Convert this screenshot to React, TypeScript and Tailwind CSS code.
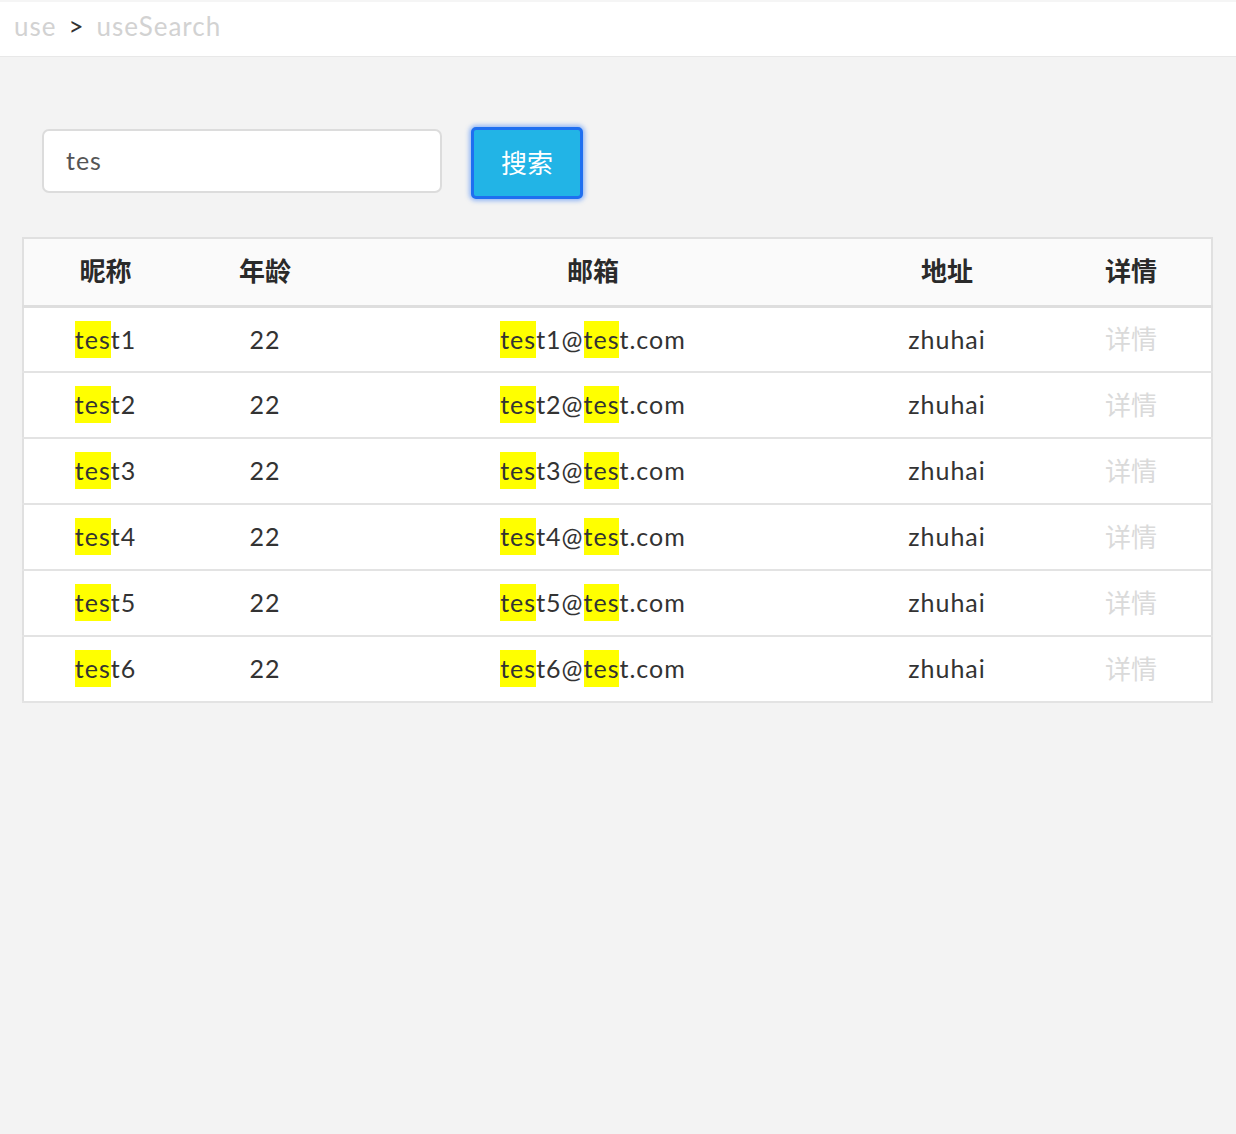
import React from 'react';

const rows = [1, 2, 3, 4, 5, 6].map((i) => ({
  name: `test${i}`,
  age: 22,
  email: `test${i}@test.com`,
  address: 'zhuhai',
}));

const keyword = 'tes';

const Highlight: React.FC<{ text: string }> = ({ text }) => {
  const parts = text.split(keyword);
  return (
    <>
      {parts.map((part, i) => (
        <React.Fragment key={i}>
          {i > 0 && <span className="bg-[#ffff00] inline-block leading-[37px]">{keyword}</span>}
          {part}
        </React.Fragment>
      ))}
    </>
  );
};

const App: React.FC = () => {
  return (
    <div
      className="min-h-[1134px] bg-[#f3f3f3] text-[#333] tracking-[1px]"
      style={{ fontFamily: 'Lato, "Noto Sans CJK SC", sans-serif' }}
    >
      {/* Breadcrumb */}
      <div className="h-[57px] bg-white border-t-2 border-[#f5f5f5] border-b border-b-[#e8e8e8] flex items-center pb-[6px] px-[14px] text-[26px] text-[#d2d2d2]">
        <span>use</span>
        <span className="mx-[12px] text-[#333]">&gt;</span>
        <span>useSearch</span>
      </div>

      <div className="pl-[22px] pt-[70px]">
        {/* Search bar */}
        <div className="flex items-center gap-[29px] pl-[20px]">
          <div className="w-[400px] h-[64px] -mt-[5px] bg-white border-2 border-[#dcdcdc] rounded-[7px] flex items-center px-[22px] text-[25px] text-[#555]">
            tes
          </div>
          <button className="w-[112px] h-[72px] bg-[#22b4e6] border-[3px] border-[#1f6ff0] rounded-[5px] text-white text-[26px] tracking-normal shadow-[0_0_4px_2px_rgba(60,130,250,0.5)]">
            搜索
          </button>
        </div>

        {/* Table */}
        <table className="mt-[38px] w-[1189px] table-fixed border-collapse border-2 border-[#e0e0e0] bg-white text-[25px]">
          <colgroup>
            <col className="w-[164px]" />
            <col className="w-[156px]" />
            <col className="w-[500px]" />
            <col className="w-[208px]" />
            <col className="w-[161px]" />
          </colgroup>
          <thead>
            <tr className="h-[68px] bg-[#fafafa] border-b-[3px] border-[#dedede] font-bold text-[26px] text-[#2a2a2a] tracking-normal">
              <th>昵称</th>
              <th>年龄</th>
              <th>邮箱</th>
              <th>地址</th>
              <th>详情</th>
            </tr>
          </thead>
          <tbody>
            {rows.map((row) => (
              <tr key={row.name} className="h-[66px] border-b-2 border-[#e3e3e3] text-center">
                <td>
                  <Highlight text={row.name} />
                </td>
                <td>{row.age}</td>
                <td>
                  <Highlight text={row.email} />
                </td>
                <td>{row.address}</td>
                <td className="text-[#dadada] text-[26px] tracking-normal">详情</td>
              </tr>
            ))}
          </tbody>
        </table>
      </div>
    </div>
  );
};

export default App;
